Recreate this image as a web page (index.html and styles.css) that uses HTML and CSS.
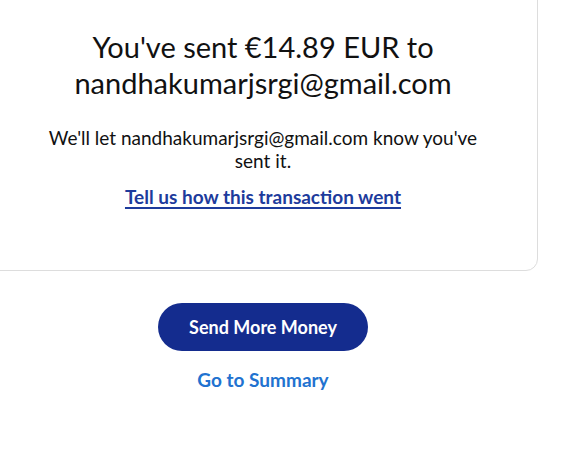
FILE: index.html
```html
<!DOCTYPE html>
<html lang="en">
<head>
  <meta charset="UTF-8" />
  <meta name="viewport" content="width=device-width, initial-scale=1.0"/>
  <title>Payment Sent</title>
  <link rel="stylesheet" href="styles.css">
</head>
<body>

  <div class="page">
    <!-- Confirmation card -->
    <div class="card">
      <h1 class="title">You've sent €14.89 EUR to nandhakumarjsrgi@gmail.com</h1>
      <p class="note">We'll let nandhakumarjsrgi@gmail.com know you've sent it.</p>
      <a class="feedback-link" href="#">Tell us how this transaction went</a>
    </div>

    <!-- Actions -->
    <div class="actions">
      <button class="primary-btn">Send More Money</button>
      <a class="summary-link" href="#">Go to Summary</a>
    </div>
  </div>

</body>
</html>
```

FILE: styles.css
```css
* {
  box-sizing: border-box;
  margin: 0;
  padding: 0;
  font-family: 'Lato', 'Noto Sans', sans-serif;
}

body {
  background: #fff;
  color: #111;
  overflow: hidden;
}

.page {
  width: 550px;
  margin-left: -12px;
}

.card {
  margin-top: -20px;
  padding: 48px 40px 61px;
  border: 1px solid #ddd;
  border-radius: 0 0 12px 12px;
  text-align: center;
  display: flex;
  flex-direction: column;
  align-items: center;
}

.title {
  font-size: 29px;
  font-weight: 400;
  line-height: 36px;
  width: 420px;
  color: #111;
}

.note {
  margin-top: 25px;
  font-size: 19px;
  line-height: 23px;
  width: 440px;
}

.feedback-link {
  margin-top: 13px;
  font-size: 19px;
  font-weight: 700;
  line-height: 24px;
  color: #1d3b9c;
  text-decoration: underline;
  text-decoration-thickness: 2px;
  text-underline-offset: 3px;
}

.actions {
  display: flex;
  flex-direction: column;
  align-items: center;
  padding-top: 32px;
}

.primary-btn {
  width: 210px;
  height: 48px;
  border: none;
  border-radius: 24px;
  background: #142c8e;
  color: #fff;
  font-size: 18px;
  font-weight: 700;
  cursor: pointer;
}

.summary-link {
  margin-top: 17px;
  font-size: 19px;
  font-weight: 700;
  line-height: 24px;
  color: #2172d0;
  text-decoration: none;
}
```
